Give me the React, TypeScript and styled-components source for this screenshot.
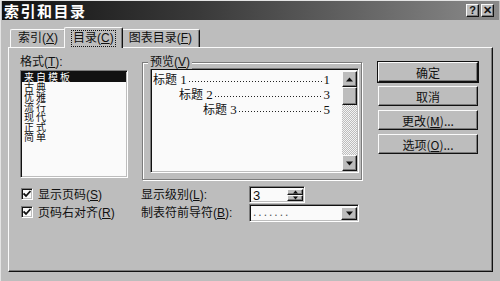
import React from "react";
import styled, { createGlobalStyle } from "styled-components";

const face = "#bdbdbd";
const shadow = "#7b7b7b";
const light = "#fafafa";

const GlobalStyle = createGlobalStyle`
  html, body { margin: 0; padding: 0; background: ${face}; }
  body {
    font-family: "Liberation Sans", "Noto Sans CJK SC", sans-serif;
    font-size: 12px;
    color: #111;
  }
`;

const Dialog = styled.div`
  width: 500px;
  height: 281px;
  box-sizing: border-box;
  background: ${face};
  border-top: 1px solid #e4e4e4;
  border-left: 1px solid #e4e4e4;
  display: flex;
  flex-direction: column;
  overflow: hidden;
`;

const TitleBar = styled.div`
  height: 19px;
  margin: 0 1px;
  display: flex;
  align-items: center;
  background: linear-gradient(90deg, #121212 0%, #3a3a3a 40%, #8a8a8a 100%);
`;

const TitleText = styled.span`
  padding-left: 2px;
  color: #fff;
  font-family: "Noto Sans CJK SC", sans-serif;
  font-weight: 700;
  font-size: 15px;
  line-height: 17px;
  letter-spacing: 1.5px;
`;

const TitleButtons = styled.div`
  margin-left: auto;
  display: flex;
  gap: 2px;
  padding-right: 5px;
`;

const CaptionButton = styled.div`
  width: 13px;
  height: 13px;
  box-sizing: border-box;
  background: ${face};
  border-top: 1px solid ${light};
  border-left: 1px solid ${light};
  border-right: 1px solid #111;
  border-bottom: 1px solid #111;
  box-shadow: inset -1px -1px ${shadow};
  display: flex;
  align-items: center;
  justify-content: center;
  font-family: "Liberation Sans", sans-serif;
  font-weight: 700;
  font-size: 11px;
  line-height: 11px;
  color: #111;
`;

const Body = styled.div`
  padding: 6px 7px 0 7px;
  display: flex;
  flex-direction: column;
`;

const TabRow = styled.div`
  height: 21px;
  padding-left: 2px;
  display: flex;
  align-items: flex-end;
`;

const Tab = styled.div<{ $active?: boolean }>`
  position: relative;
  z-index: ${({ $active }) => ($active ? 1 : 0)};
  height: ${({ $active }) => ($active ? 21 : 18)}px;
  margin: ${({ $active }) => ($active ? "0 -2px -1px -2px" : "0")};
  padding: 0 ${({ $active }) => ($active ? 8 : 7)}px;
  box-sizing: border-box;
  background: ${face};
  border-top: 1px solid ${light};
  border-left: 1px solid ${light};
  border-right: 1px solid #111;
  border-radius: 2px 2px 0 0;
  box-shadow: inset -1px 0 ${shadow};
  display: flex;
  align-items: center;
  white-space: nowrap;
`;

const TabLabel = styled.span<{ $focus?: boolean }>`
  outline: ${({ $focus }) => ($focus ? "1px dotted #111" : "none")};
  outline-offset: 1px;
  line-height: 13px;
`;

const Key = styled.span`
  text-decoration: underline;
`;

const Panel = styled.div`
  height: 225px;
  box-sizing: border-box;
  border-top: 1px solid ${light};
  border-left: 1px solid ${light};
  border-right: 1px solid #111;
  border-bottom: 1px solid #111;
  box-shadow: inset -1px -1px ${shadow};
  padding: 8px 0 0 11px;
  display: flex;
  flex-direction: column;
`;

const TopRow = styled.div`
  display: flex;
  align-items: flex-start;
`;

const FormatColumn = styled.div`
  width: 108px;
  display: flex;
  flex-direction: column;
`;

const FieldLabel = styled.div`
  height: 14px;
  line-height: 12px;
  white-space: nowrap;
`;

const Sunken = styled.div`
  box-sizing: border-box;
  background: ${light};
  border-top: 1px solid ${shadow};
  border-left: 1px solid ${shadow};
  border-right: 1px solid #fff;
  border-bottom: 1px solid #fff;
  box-shadow: inset 1px 1px #111, inset -1px -1px ${face};
`;

const ListBox = styled(Sunken)`
  height: 108px;
  padding: 1px 1px 0 1px;
  display: flex;
  flex-direction: column;
`;

const ListItem = styled.div<{ $selected?: boolean }>`
  height: 10px;
  line-height: 10px;
  padding-left: 2px;
  font-family: "Noto Sans CJK SC", sans-serif;
  font-size: 10px;
  letter-spacing: 2px;
  background: ${({ $selected }) => ($selected ? "#111" : "transparent")};
  color: ${({ $selected }) => ($selected ? "#fff" : "#111")};
  white-space: nowrap;
`;

const GroupBox = styled.div`
  position: relative;
  margin: 6px 0 0 14px;
  width: 220px;
  height: 118px;
  box-sizing: border-box;
  border: 1px solid ${shadow};
  box-shadow: inset 1px 1px #fff, 1px 1px #fff;
  padding: 5px 2px 0 7px;
`;

const Legend = styled.span`
  position: absolute;
  top: -8px;
  left: 5px;
  padding: 0 2px;
  background: ${face};
  line-height: 14px;
  white-space: nowrap;
`;

const PreviewFrame = styled(Sunken)`
  height: 105px;
  display: flex;
  padding: 2px 1px 1px 2px;
`;

const PreviewText = styled.div`
  flex: 1;
  padding: 0 12px 0 0;
  display: flex;
  flex-direction: column;
`;

const TocLine = styled.div<{ $indent: number }>`
  height: 15px;
  line-height: 15px;
  padding-left: ${({ $indent }) => $indent}px;
  display: flex;
  align-items: baseline;
  white-space: nowrap;
  font-family: "Noto Sans CJK SC", sans-serif;
  font-size: 12px;
`;

const TocNum = styled.span`
  font-family: "Liberation Serif", serif;
  font-size: 13px;
`;

const Leader = styled.span`
  flex: 1;
  margin: 0 1px;
  height: 1px;
  background-image: radial-gradient(circle, #222 0.6px, transparent 0.8px);
  background-size: 3px 2px;
  background-repeat: repeat-x;
  align-self: flex-end;
  margin-bottom: 4px;
`;

const ScrollBar = styled.div`
  width: 15px;
  display: flex;
  flex-direction: column;
`;

const RaisedBox = styled.div`
  box-sizing: border-box;
  background: ${face};
  border-top: 1px solid ${light};
  border-left: 1px solid ${light};
  border-right: 1px solid #111;
  border-bottom: 1px solid #111;
  box-shadow: inset -1px -1px ${shadow};
  display: flex;
  align-items: center;
  justify-content: center;
`;

const ArrowButton = styled(RaisedBox)`
  height: 16px;
`;

const Thumb = styled(RaisedBox)`
  height: 18px;
`;

const Track = styled.div`
  flex: 1;
  background-color: ${face};
  background-image: repeating-conic-gradient(#f4f4f4 0 25%, ${face} 0 50%);
  background-size: 2px 2px;
`;

const ButtonColumn = styled.div`
  margin: 6px 0 0 16px;
  width: 100px;
  display: flex;
  flex-direction: column;
  gap: 4px;
`;

const PushButton = styled(RaisedBox)<{ $default?: boolean }>`
  height: 20px;
  font-family: "Noto Sans CJK SC", sans-serif;
  font-size: 12px;
  outline: ${({ $default }) => ($default ? "1px solid #111" : "none")};
  white-space: nowrap;
`;

const BottomGrid = styled.div`
  margin-top: 6px;
  display: grid;
  grid-template-columns: 121px 108px auto;
  grid-template-rows: 18px 18px;
  align-items: center;
`;

const CheckItem = styled.div`
  display: flex;
  align-items: center;
  gap: 5px;
  padding-left: 1px;
  margin-top: -3px;
  white-space: nowrap;
`;

const CheckBox = styled(Sunken)`
  width: 12px;
  height: 12px;
  display: flex;
  align-items: center;
  justify-content: center;
`;

const RowLabel = styled.div`
  white-space: nowrap;
  margin-top: -3px;
`;

const SpinBox = styled(Sunken)`
  width: 56px;
  height: 17px;
  display: flex;
  align-items: stretch;
  padding: 2px 1px 1px 3px;
  margin-top: -1px;
`;

const SpinValue = styled.span`
  flex: 1;
  font-size: 13px;
  line-height: 13px;
`;

const SpinButtons = styled.div`
  width: 16px;
  display: flex;
  flex-direction: column;
`;

const SpinHalf = styled(RaisedBox)`
  flex: 1;
`;

const Select = styled(Sunken)`
  width: 110px;
  height: 18px;
  display: flex;
  align-items: stretch;
  padding: 2px 1px 1px 3px;
`;

const SelectValue = styled.span`
  flex: 1;
  letter-spacing: 2px;
  line-height: 10px;
  color: #555;
`;

const DropButton = styled(RaisedBox)`
  width: 16px;
`;

const Arrow = ({ down, size = 7 }: { down?: boolean; size?: number }) => (
  <svg width={size} height={Math.ceil(size / 2) + 1} viewBox="0 0 7 4">
    <polygon points={down ? "0,0 7,0 3.5,4" : "0,4 7,4 3.5,0"} fill="#111" />
  </svg>
);

const Check = () => (
  <svg width="8" height="8" viewBox="0 0 8 8">
    <path d="M0.5 3.5 L3 6 L7.5 1" stroke="#111" strokeWidth="1.8" fill="none" />
  </svg>
);

const formats = ["来自模板", "古典", "优雅", "流行", "现代", "正式", "简单"];

export default function App() {
  return (
    <>
      <GlobalStyle />
      <Dialog>
        <TitleBar>
          <TitleText>索引和目录</TitleText>
          <TitleButtons>
            <CaptionButton>?</CaptionButton>
            <CaptionButton>✕</CaptionButton>
          </TitleButtons>
        </TitleBar>
        <Body>
          <TabRow>
            <Tab>
              <TabLabel>
                索引(<Key>X</Key>)
              </TabLabel>
            </Tab>
            <Tab $active>
              <TabLabel $focus>
                目录(<Key>C</Key>)
              </TabLabel>
            </Tab>
            <Tab>
              <TabLabel>
                图表目录(<Key>F</Key>)
              </TabLabel>
            </Tab>
          </TabRow>
          <Panel>
            <TopRow>
              <FormatColumn>
                <FieldLabel>
                  格式(<Key>T</Key>):
                </FieldLabel>
                <ListBox>
                  {formats.map((f, i) => (
                    <ListItem key={f} $selected={i === 0}>
                      {f}
                    </ListItem>
                  ))}
                </ListBox>
              </FormatColumn>
              <GroupBox>
                <Legend>
                  预览(<Key>V</Key>)
                </Legend>
                <PreviewFrame>
                  <PreviewText>
                    <TocLine $indent={0}>
                      标题 <TocNum>&nbsp;1</TocNum>
                      <Leader />
                      <TocNum>1</TocNum>
                    </TocLine>
                    <TocLine $indent={26}>
                      标题 <TocNum>&nbsp;2</TocNum>
                      <Leader />
                      <TocNum>3</TocNum>
                    </TocLine>
                    <TocLine $indent={50}>
                      标题 <TocNum>&nbsp;3</TocNum>
                      <Leader />
                      <TocNum>5</TocNum>
                    </TocLine>
                  </PreviewText>
                  <ScrollBar>
                    <ArrowButton>
                      <Arrow />
                    </ArrowButton>
                    <Thumb />
                    <Track />
                    <ArrowButton>
                      <Arrow down />
                    </ArrowButton>
                  </ScrollBar>
                </PreviewFrame>
              </GroupBox>
              <ButtonColumn>
                <PushButton $default>确定</PushButton>
                <PushButton>取消</PushButton>
                <PushButton>
                  <span>
                    更改(<Key>M</Key>)...
                  </span>
                </PushButton>
                <PushButton>
                  <span>
                    选项(<Key>O</Key>)...
                  </span>
                </PushButton>
              </ButtonColumn>
            </TopRow>
            <BottomGrid>
              <CheckItem>
                <CheckBox>
                  <Check />
                </CheckBox>
                <span>
                  显示页码(<Key>S</Key>)
                </span>
              </CheckItem>
              <RowLabel>
                显示级别(<Key>L</Key>):
              </RowLabel>
              <SpinBox>
                <SpinValue>3</SpinValue>
                <SpinButtons>
                  <SpinHalf>
                    <Arrow size={5} />
                  </SpinHalf>
                  <SpinHalf>
                    <Arrow down size={5} />
                  </SpinHalf>
                </SpinButtons>
              </SpinBox>
              <CheckItem>
                <CheckBox>
                  <Check />
                </CheckBox>
                <span>
                  页码右对齐(<Key>R</Key>)
                </span>
              </CheckItem>
              <RowLabel>
                制表符前导符(<Key>B</Key>):
              </RowLabel>
              <Select>
                <SelectValue>.......</SelectValue>
                <DropButton>
                  <Arrow down />
                </DropButton>
              </Select>
            </BottomGrid>
          </Panel>
        </Body>
      </Dialog>
    </>
  );
}
